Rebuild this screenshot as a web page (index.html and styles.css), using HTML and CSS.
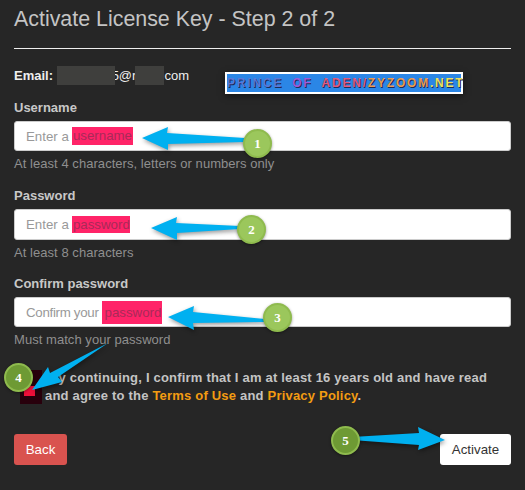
FILE: index.html
```html
<!DOCTYPE html>
<html lang="en">
<head>
    <meta charset="UTF-8">
    <meta name="viewport" content="width=device-width, initial-scale=1.0">
    <title>Activate License Key</title>
    <link rel="stylesheet" href="styles.css">
</head>
<body>
    <div class="container">
        <h1>Activate License Key - Step 2 of 2</h1>
        <hr class="divider">

        <div class="email-row">
            <div class="email"><b>Email:</b> <span class="blur blur-name"></span>5@r<span class="blur blur-domain"></span>com</div>
            <div class="banner">
                <span class="c1">PRINCE</span> <span class="c2">OF</span> <span class="c3">ADEN/</span><span class="c4">ZYZOOM</span><span class="c5">.NET</span>
            </div>
        </div>

        <div class="field">
            <label>Username</label>
            <div class="input"><span>Enter a</span><span class="mark mark-user">username</span></div>
            <div class="help">At least 4 characters, letters or numbers only</div>
        </div>

        <div class="field field-pass">
            <label>Password</label>
            <div class="input"><span>Enter a</span><span class="mark mark-pass">password</span></div>
            <div class="help">At least 8 characters</div>
        </div>

        <div class="field">
            <label>Confirm password</label>
            <div class="input"><span class="tight">Confirm your</span><span class="mark mark-confirm">password</span></div>
            <div class="help">Must match your password</div>
        </div>

        <div class="terms">
            <div class="check"><div class="check-box"></div></div>
            <p>By continuing, I confirm that I am at least 16 years old and have read<br>and agree to the <a href="#">Terms of Use</a> and <a href="#">Privacy Policy</a>.</p>
        </div>

        <div class="actions">
            <button class="btn btn-back">Back</button>
            <button class="btn btn-activate">Activate</button>
        </div>
    </div>

    <!-- annotations drawn over the form -->
    <svg class="arrows" width="525" height="490" viewBox="0 0 525 490">
        <polygon points="142,138 168,127 167,133 245,138 245,142 168,144 168,150"/>
        <polygon points="151,228 177,217 176,223 240,226 240,229 177,233 177,240"/>
        <polygon points="168,317 194,306 193,312 265,319 265,322 193,323 194,330"/>
        <polygon points="32,390 48,367 50,373 108,343 58,377 62,382"/>
        <polygon points="352,437 419,433 418,427 445,440 418,450 419,445 352,440"/>
    </svg>
    <div class="badge badge-1">1</div>
    <div class="badge badge-2">2</div>
    <div class="badge badge-3">3</div>
    <div class="badge badge-dark badge-4">4</div>
    <div class="badge badge-dark badge-5">5</div>
</body>
</html>
```

FILE: styles.css
```css
* {
    box-sizing: border-box;
    margin: 0;
    padding: 0;
    font-family: "Liberation Sans", Arial, sans-serif;
}

html, body {
    height: 490px;
    overflow: hidden;
}

body {
    position: relative;
    background-color: #262626;
    color: #c8c8c8;
}

.container {
    padding: 0 14px;
}

h1 {
    font-size: 21.4px;
    font-weight: normal;
    line-height: 24px;
    padding-top: 7px;
    color: #c4c4c4;
}

.divider {
    border: none;
    border-top: 1px solid #eee;
    margin-top: 17px;
}

/* email */
.email-row {
    display: flex;
    height: 51px;
    padding-top: 17px;
}

.email {
    width: 211px;
    font-size: 13px;
    line-height: 16px;
    color: #eee;
    white-space: nowrap;
}

.blur {
    position: relative;
    display: inline-block;
    height: 19px;
    vertical-align: -5px;
    background: #3f3f3d;
}

.blur-name {
    width: 58px;
    margin-right: -3px;
}

.blur-domain {
    width: 29px;
    margin-left: -1px;
}

.banner {
    width: 238px;
    height: 22px;
    margin-top: 6px;
    border: 2px solid #fff;
    background: #2b86e6;
    font-family: "DejaVu Sans Mono", monospace;
    font-size: 12px;
    font-weight: bold;
    letter-spacing: 1.8px;
    line-height: 18px;
    text-align: center;
    white-space: nowrap;
    text-shadow: 1px 1px 0 #1d2b55;
    box-shadow: 0 2px 6px rgba(0, 0, 0, 0.5);
}

.c1 { color: #5a78d8; }
.c2 { color: #a058d8; }
.c3 { color: #e05a80; }
.c4 { color: #e89a50; }
.c5 { color: #ece060; }

/* form */
.field {
    margin-bottom: 16px;
}

.field-pass {
    margin-bottom: 15px;
}

.field label {
    display: block;
    font-size: 13px;
    font-weight: bold;
    line-height: 16px;
    margin-bottom: 5px;
    color: #c8c8c8;
}

.input {
    display: flex;
    align-items: center;
    gap: 3px;
    height: 30px;
    padding-left: 11px;
    background: #fff;
    border: 1px solid #ccc;
    border-radius: 3px;
    color: #999;
    font-size: 13.3px;
    white-space: nowrap;
}

.field-pass .input {
    height: 31px;
}

.tight {
    letter-spacing: -0.3px;
}

.mark {
    background: #ff2468;
    color: #a82a58;
}

.mark-user {
    width: 61px;
    height: 18px;
    line-height: 18px;
    padding-left: 1px;
}

.mark-pass {
    width: 58px;
    height: 17px;
    line-height: 17px;
    padding-left: 1px;
}

.mark-confirm {
    width: 60px;
    height: 23px;
    line-height: 23px;
    padding-left: 3px;
}

.help {
    margin-top: 5px;
    font-size: 13px;
    letter-spacing: 0.05px;
    line-height: 16px;
    color: #8f8f8f;
}

/* terms */
.terms {
    display: flex;
    gap: 3px;
    margin-top: 21px;
    padding-left: 6px;
}

.check {
    flex: none;
    width: 22px;
    height: 34px;
    margin-top: 1px;
    padding: 16px 4px 0 4px;
    background: #28000c;
}

.check-box {
    width: 11px;
    height: 10px;
    background: #f0103a;
}

.terms p {
    font-size: 13px;
    font-weight: bold;
    letter-spacing: 0.2px;
    line-height: 18px;
    color: #c4c4c4;
    text-indent: 4px;
    white-space: nowrap;
}

.terms a {
    color: #f39c12;
    text-decoration: none;
}

/* buttons */
.actions {
    display: flex;
    justify-content: space-between;
    margin-top: 29px;
}

.btn {
    height: 31px;
    border: none;
    border-radius: 3px;
    font-size: 13.3px;
}

.btn-back {
    width: 53px;
    background: #d9534f;
    color: #fff;
}

.btn-activate {
    width: 71px;
    background: #fff;
    color: #333;
}

/* annotations */
.arrows {
    position: absolute;
    top: 0;
    left: 0;
    fill: #00b0f0;
    filter: drop-shadow(1px 2px 2px rgba(0, 0, 0, 0.4));
}

.badge {
    position: absolute;
    width: 29px;
    height: 29px;
    border: 2px solid #8fbb4e;
    border-radius: 50%;
    background: #9bc75c;
    color: #fff;
    font-family: "Liberation Serif", serif;
    font-size: 13px;
    font-weight: bold;
    line-height: 25px;
    text-align: center;
    box-shadow: 0 1px 3px rgba(0, 0, 0, 0.4);
}

.badge-dark {
    background: #6e9a34;
}

.badge-1 { left: 243px; top: 129px; }
.badge-2 { left: 237px; top: 215px; }
.badge-3 { left: 263px; top: 303px; }
.badge-4 { left: 4px; top: 363px; }
.badge-5 { left: 331px; top: 426px; }
```
